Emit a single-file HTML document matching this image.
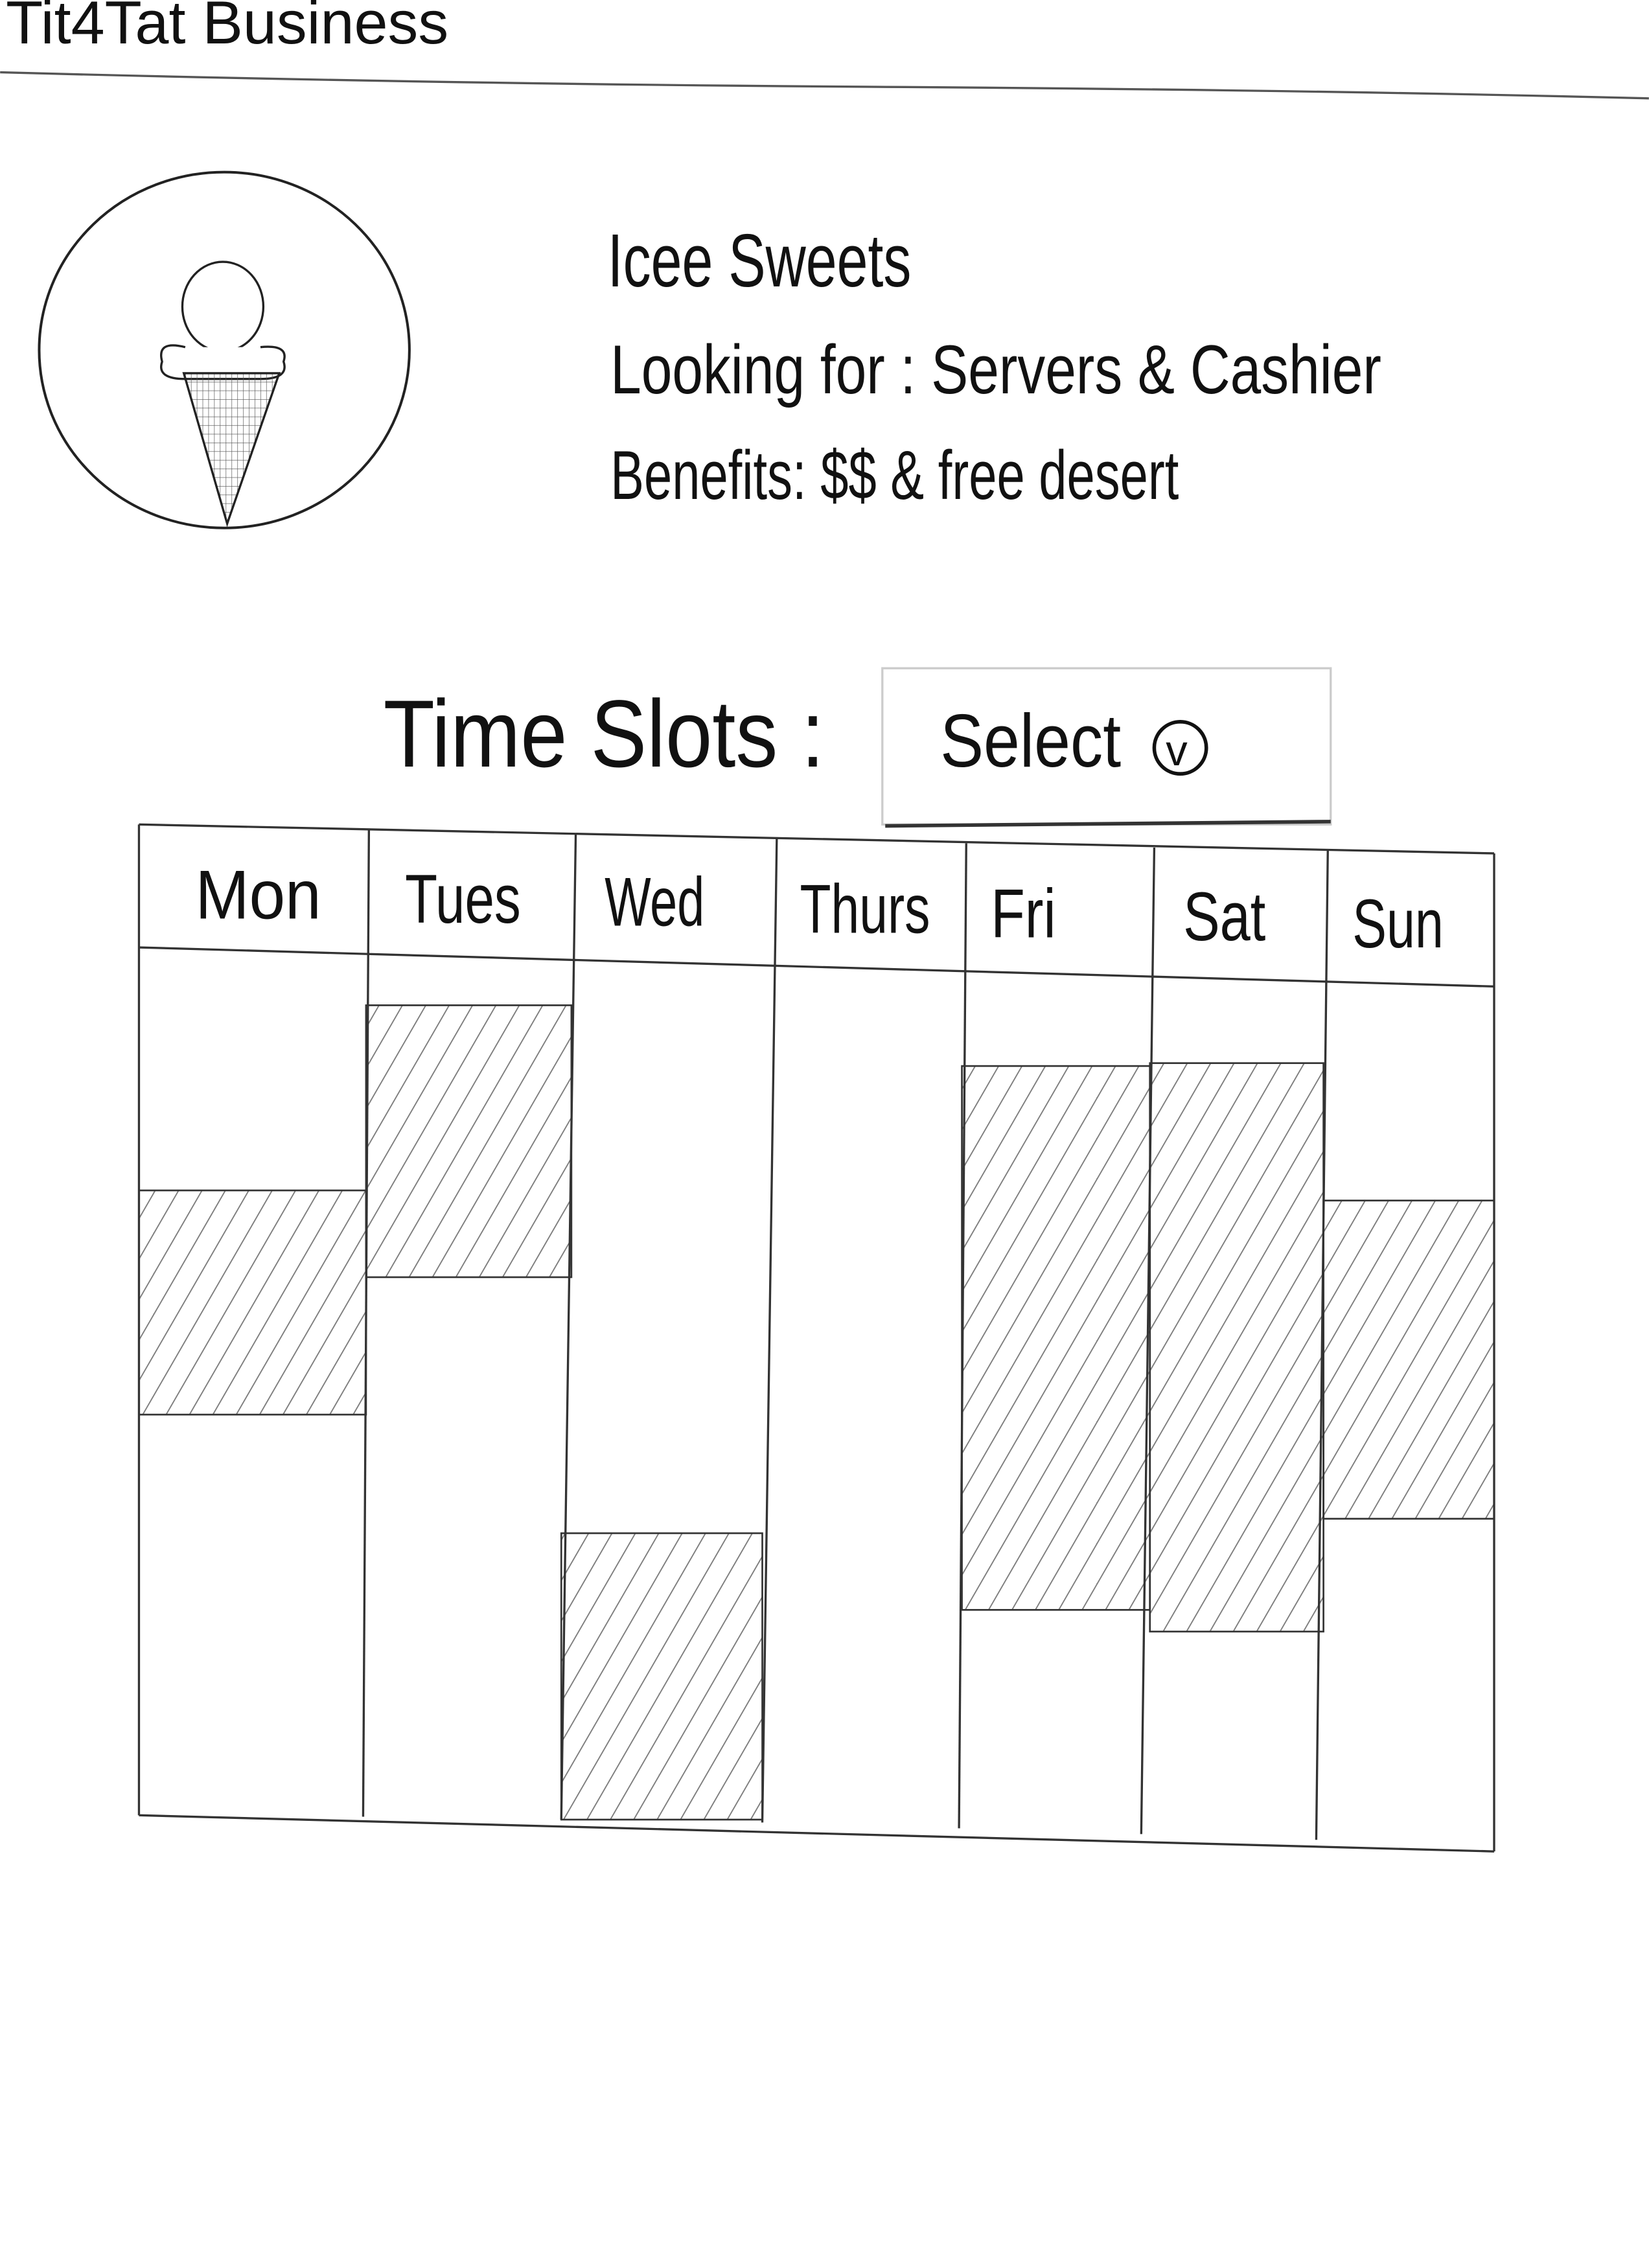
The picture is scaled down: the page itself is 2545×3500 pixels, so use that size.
<!DOCTYPE html>
<html><head><meta charset="utf-8"><style>
html,body{margin:0;padding:0;background:#fff;}
svg{display:block;}
text{font-family:"Liberation Sans",sans-serif;fill:#111;}
</style></head><body>
<svg width="2545" height="3500" viewBox="0 0 1140 1568" xmlns="http://www.w3.org/2000/svg">
<defs>
<pattern id="h" width="14" height="14" patternUnits="userSpaceOnUse" patternTransform="rotate(30)">
<line x1="0" y1="0" x2="0" y2="14" stroke="#777" stroke-width="1.6"/>
</pattern>
<pattern id="c" width="4" height="6" patternUnits="userSpaceOnUse">
<line x1="0" y1="0" x2="0" y2="6" stroke="#555" stroke-width="0.6"/>
<line x1="0" y1="0" x2="4" y2="0" stroke="#555" stroke-width="0.6"/>
</pattern>
</defs>
<rect width="1140" height="1568" fill="#fff"/>
<text x="4" y="30" font-size="42" fill="#333" textLength="306" lengthAdjust="spacingAndGlyphs">Tit4Tat  Business</text>
<path d="M0 50 Q300 58 600 60 T1140 68" fill="none" stroke="#555" stroke-width="1.5"/>
<ellipse cx="155" cy="242" rx="128" ry="123" fill="none" stroke="#222" stroke-width="1.8"/>
<ellipse cx="154" cy="212" rx="28" ry="31" fill="#fff" stroke="#222" stroke-width="1.5"/>
<path d="M128 240 Q108 235 112 250 Q108 262 128 262 L180 262 Q200 262 196 250 Q200 238 180 240" fill="#fff" stroke="#222" stroke-width="1.5"/>
<path d="M127 258 L193 258 L157 362 Z" fill="url(#c)" stroke="#222" stroke-width="1.5"/>
<text x="420" y="198" font-size="52" textLength="210" lengthAdjust="spacingAndGlyphs">Icee Sweets</text>
<text x="422" y="272" font-size="48" textLength="533" lengthAdjust="spacingAndGlyphs">Looking for :  Servers  &amp;  Cashier</text>
<text x="422" y="345" font-size="48" textLength="393" lengthAdjust="spacingAndGlyphs">Benefits: $$  &amp;  free desert</text>
<text x="265" y="530" font-size="66" textLength="305" lengthAdjust="spacingAndGlyphs">Time  Slots :</text>
<rect x="610" y="462" width="310" height="108" fill="#fff" stroke="#ccc" stroke-width="1.5"/>
<line x1="612" y1="571" x2="920" y2="568" stroke="#333" stroke-width="2.5"/>
<text x="650" y="530" font-size="52" textLength="125" lengthAdjust="spacingAndGlyphs">Select</text>
<circle cx="816" cy="517" r="18" fill="none" stroke="#111" stroke-width="2.5"/>
<text x="806" y="529" font-size="30">v</text>
<g fill="url(#h)" stroke="#333" stroke-width="1.2">
<rect x="96" y="823" width="157" height="155"/>
<rect x="253" y="695" width="142" height="188"/>
<rect x="388" y="1060" width="139" height="198"/>
<rect x="665" y="737" width="130" height="376"/>
<rect x="795" y="735" width="120" height="393"/>
<rect x="915" y="830" width="118" height="220"/>
</g>
<g stroke="#333" stroke-width="1.5" fill="none">
<line x1="96" y1="570" x2="1033" y2="590"/>
<line x1="96" y1="655" x2="1033" y2="682"/>
<line x1="96" y1="1255" x2="1033" y2="1280"/>
<line x1="96" y1="570" x2="96" y2="1255"/>
<line x1="255" y1="573" x2="251" y2="1256"/>
<line x1="398" y1="576" x2="388" y2="1258"/>
<line x1="537" y1="580" x2="527" y2="1260"/>
<line x1="668" y1="583" x2="663" y2="1264"/>
<line x1="798" y1="586" x2="789" y2="1268"/>
<line x1="918" y1="588" x2="910" y2="1272"/>
<line x1="1033" y1="590" x2="1033" y2="1280"/>
</g>
<g font-size="48">
<text x="135" y="635" textLength="87" lengthAdjust="spacingAndGlyphs">Mon</text>
<text x="280" y="638" textLength="80" lengthAdjust="spacingAndGlyphs">Tues</text>
<text x="418" y="640" textLength="69" lengthAdjust="spacingAndGlyphs">Wed</text>
<text x="553" y="645" textLength="90" lengthAdjust="spacingAndGlyphs">Thurs</text>
<text x="685" y="648" textLength="45" lengthAdjust="spacingAndGlyphs">Fri</text>
<text x="818" y="650" textLength="57" lengthAdjust="spacingAndGlyphs">Sat</text>
<text x="935" y="655" textLength="63" lengthAdjust="spacingAndGlyphs">Sun</text>
</g>
</svg>
</body></html>
